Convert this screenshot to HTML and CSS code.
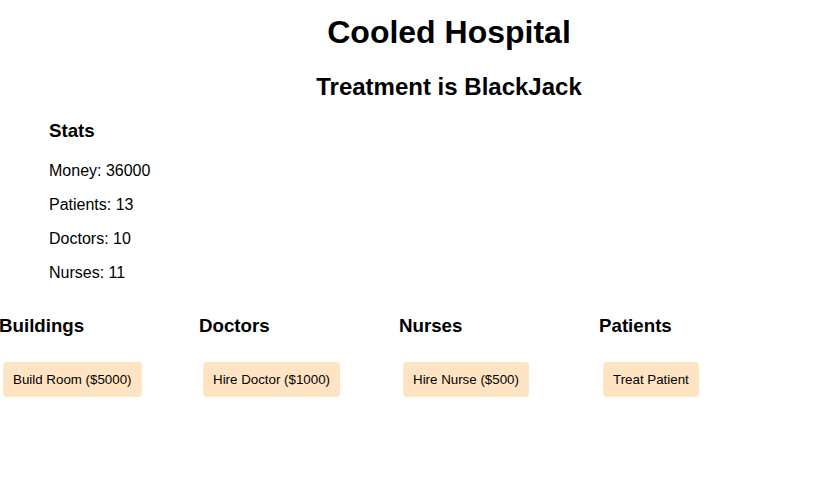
FILE: index.html
```html
<!DOCTYPE html>
<html>
<head>
<meta charset="utf-8">
<link rel="stylesheet" href="styles.css">
</head>
<body>
<div class="header">
  <h1 class="title">Cooled Hospital</h1>
  <h2 class="subtitle">Treatment is BlackJack</h2>
</div>
<div class="stats">
  <h3 class="section-title stats-title">Stats</h3>
  <p class="stat">Money: 36000</p>
  <p class="stat">Patients: 13</p>
  <p class="stat">Doctors: 10</p>
  <p class="stat">Nurses: 11</p>
</div>
<div class="columns">
  <div class="column">
    <h3 class="section-title col-title">Buildings</h3>
    <button class="action">Build Room ($5000)</button>
  </div>
  <div class="column">
    <h3 class="section-title col-title">Doctors</h3>
    <button class="action">Hire Doctor ($1000)</button>
  </div>
  <div class="column">
    <h3 class="section-title col-title">Nurses</h3>
    <button class="action">Hire Nurse ($500)</button>
  </div>
  <div class="column">
    <h3 class="section-title col-title">Patients</h3>
    <button class="action">Treat Patient</button>
  </div>
</div>
</body>
</html>
```
FILE: styles.css
```css
html, body {
  margin: 0;
  padding: 0;
  background: #fff;
}
body {
  font-family: "Liberation Sans", Arial, sans-serif;
  color: #000;
}
.header {
  margin-left: 49px;
  width: 800px;
  text-align: center;
  padding-top: 14px;
}
.title {
  font-size: 32px;
  margin: 0 0 22px;
}
.subtitle {
  font-size: 24px;
  margin: 0;
}
.stats {
  padding-left: 49px;
}
.section-title {
  font-size: 18.72px;
  margin: 18.72px 0;
}
.stats-title {
  margin-bottom: 20.72px;
}
.stat {
  font-size: 16px;
  margin: 16px 0;
}
.columns {
  display: flex;
  margin-left: -1px;
}
.col-title {
  margin-top: 16.72px;
}
.column {
  width: 200px;
}
.action {
  font-family: "Liberation Sans", Arial, sans-serif;
  font-size: 13.33px;
  background: #ffe4c4;
  color: #000;
  border: none;
  border-radius: 4px;
  padding: 10px 10px;
  margin-left: 4px;
  margin-top: 6px;
}
```
